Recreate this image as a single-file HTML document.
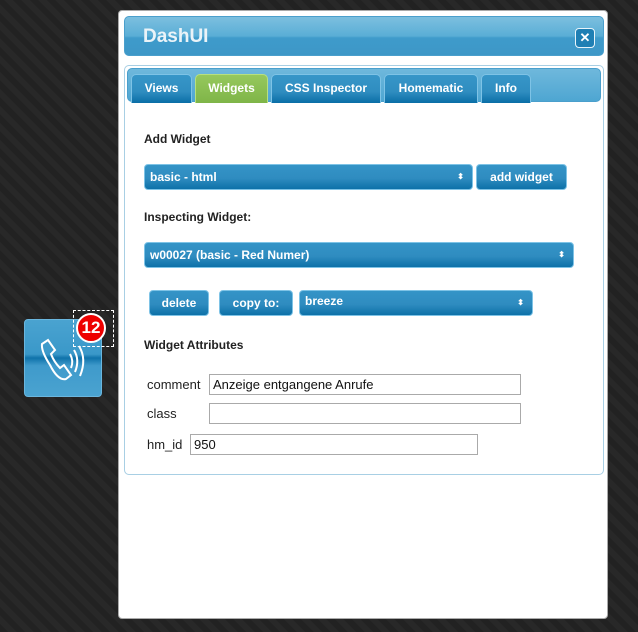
<!DOCTYPE html>
<html><head><style>
*{box-sizing:border-box}
body{margin:0;width:638px;height:632px;background:#232323;background-image:repeating-linear-gradient(45deg,#222 0 6px,#282828 6px 12px);font-family:"Liberation Sans",Verdana,sans-serif;position:relative;overflow:hidden}
.dlg{position:absolute;left:118px;top:10px;width:490px;height:609px;background:#fff;border:1px solid #aaa;border-radius:4px}
.title{position:absolute;left:5px;top:5px;width:480px;height:40px;border-radius:5px;background:linear-gradient(#7cbfdf,#5aaed6 50%,#3f9bcb 55%,#3d97c7);border:1px solid #4a9fcc}
.title span{position:absolute;left:18px;top:9px;color:#eaf3f8;font-weight:bold;font-size:19px}
.close{position:absolute;right:8px;top:11px;width:20px;height:20px;border-radius:4px;background:#1f7fb4;border:1px solid #e8f4fa;color:#fff;font-size:13px;font-weight:bold;text-align:center;line-height:17px}
.panel{position:absolute;left:5px;top:54px;width:480px;height:410px;border:1px solid #a8cfe4;border-radius:5px}
.tabs{position:absolute;left:2px;top:2px;width:474px;height:34px;border-radius:5px;background:linear-gradient(#6fb8dc,#4ea6d2);border:1px solid #4a9fcc}
.tab{position:absolute;top:5px;height:29px;border:1px solid #7ec3e6;border-bottom:0;border-radius:5px 5px 0 0;background:linear-gradient(#3796c8,#2f8dc0 60%,#0a6ea6);color:#fff;font-weight:bold;font-size:12px;text-align:center;line-height:27px}
.tab.act{background:linear-gradient(#96c85d,#7fb548);border-color:#b7e080}
.lbl{position:absolute;font-weight:bold;font-size:12px;color:#222}
.btn{position:absolute;height:26px;border-radius:4px;border:1px solid #7ec3e6;background:linear-gradient(#3494c7,#2f8cc0 55%,#0d71a8);color:#fff;font-size:12px;font-weight:bold;line-height:24px}
.arr{position:absolute;right:8px;top:0;font-size:8px}
.t{position:absolute;font-size:13px;color:#222}
.in{position:absolute;height:21px;border:1px solid #aaa;background:#fff;font-size:13px;padding-left:3px;line-height:19px;color:#111}
</style></head><body>
<div class="dlg">
<div class="title"><span>DashUI</span><div class="close">✕</div></div>
<div class="panel">
<div class="tabs">
<div class="tab" style="left:3px;width:61px">Views</div>
<div class="tab act" style="left:67px;width:73px">Widgets</div>
<div class="tab" style="left:143px;width:110px">CSS Inspector</div>
<div class="tab" style="left:256px;width:94px">Homematic</div>
<div class="tab" style="left:353px;width:50px">Info</div>
</div>
</div>
<div class="lbl" style="left:25px;top:121px">Add Widget</div>
<div class="btn" style="left:25px;top:153px;width:329px;padding-left:5px">basic - html<span class="arr" style="line-height:24px">⬍</span></div>
<div class="btn" style="left:357px;top:153px;width:91px;text-align:center">add widget</div>
<div class="lbl" style="left:25px;top:199px">Inspecting Widget:</div>
<div class="btn" style="left:25px;top:231px;width:430px;padding-left:5px">w00027 (basic - Red Numer)<span class="arr" style="line-height:24px">⬍</span></div>
<div class="btn" style="left:30px;top:279px;width:60px;text-align:center">delete</div>
<div class="btn" style="left:100px;top:279px;width:74px;text-align:center">copy to:</div>
<div class="btn" style="left:180px;top:279px;width:234px;padding-left:5px;line-height:20px">breeze<span class="arr" style="line-height:24px">⬍</span></div>
<div class="lbl" style="left:25px;top:327px">Widget Attributes</div>
<div class="t" style="left:28px;top:366px">comment</div>
<div class="in" style="left:90px;top:363px;width:312px">Anzeige entgangene Anrufe</div>
<div class="t" style="left:28px;top:395px">class</div>
<div class="in" style="left:90px;top:392px;width:312px"></div>
<div class="t" style="left:28px;top:426px">hm_id</div>
<div class="in" style="left:71px;top:423px;width:288px">950</div>
</div>
<div style="position:absolute;left:24px;top:319px;width:78px;height:78px;border-radius:4px;border:1px solid #6ab6de;background:linear-gradient(#4aa3d0,#3a98c9 45%,#0f72aa 50%,#3f9acb 60%,#4aa3d0)">
<svg width="78" height="78" viewBox="0 0 78 78" style="position:absolute;left:0;top:0"><g fill="none" stroke="#fff" stroke-width="2"><path d="M17 24 l6-4 l7 10 l-4 4 q3 8 9 14 l4-3 l7 10 l-5 4 q-8 2-16-14 q-9-14-8-21z"/><path d="M45 34 q4 7 1 14"/><path d="M49 30 q6 10 1 22"/><path d="M54 26 q8 13 1 30"/></g></svg>
</div>
<div style="position:absolute;left:73px;top:310px;width:41px;height:37px;border:1px dashed #fff"></div>
<div style="position:absolute;left:76px;top:313px;width:30px;height:30px;border-radius:50%;background:#e00;border:2px solid #fff;color:#fff;font-weight:bold;font-size:17px;text-align:center;line-height:26px">12</div>
</body></html>
